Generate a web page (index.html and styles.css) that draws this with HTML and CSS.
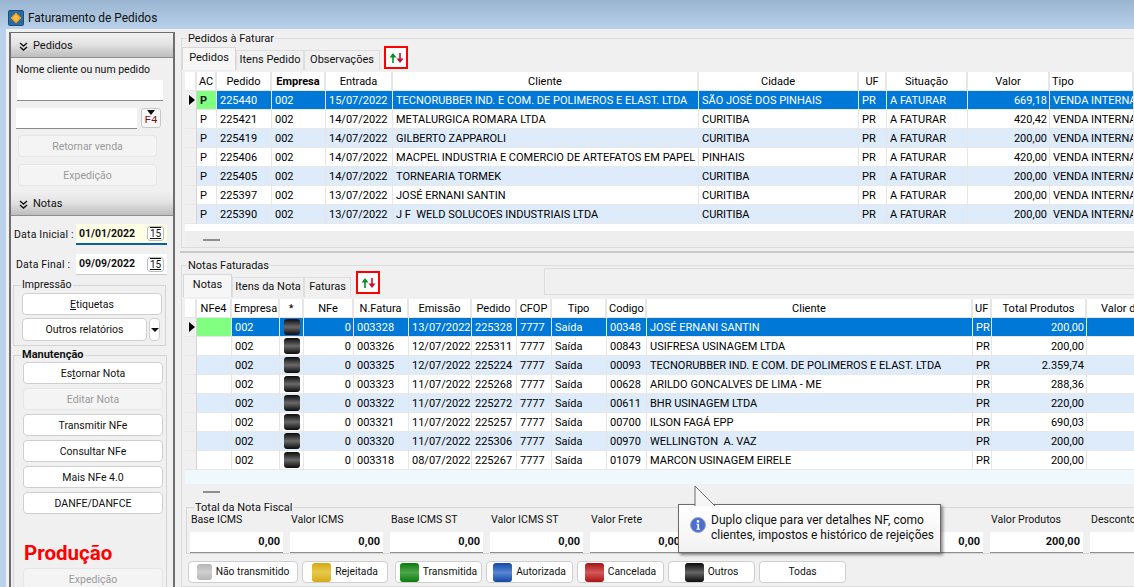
FILE: index.html
```html
<!DOCTYPE html>
<html lang="pt-BR">
<head>
<meta charset="utf-8">
<title>Faturamento de Pedidos</title>
<link rel="stylesheet" href="styles.css">
</head>
<body>
<div class="window">
  <header class="titlebar">
    <svg class="app-icon" width="16" height="16" viewBox="0 0 16 16"><rect width="16" height="16" rx="2" fill="#1b4f7c"/><rect x="1" y="1" width="14" height="14" rx="1" fill="#2a6aa0"/><path d="M8 2.5 13.5 8 8 13.5 2.5 8z" fill="#f59a1c"/><path d="M8 4.5 11.5 8 8 11.5 4.5 8z" fill="#fbc04e"/></svg>
    <span>Faturamento de Pedidos</span>
  </header>
  <div class="client">
    <aside class="sidebar">
      <div class="side-head"><svg width="9" height="9" viewBox="0 0 9 9"><path d="M1 1l3.5 3L8 1M1 5l3.5 3L8 5" fill="none" stroke="#111" stroke-width="1.4"/></svg><span>Pedidos</span></div>
      <div class="pedidos-body">
        <div class="lbl name-lbl">Nome cliente ou num pedido</div>
        <div class="input name-input"></div>
        <div class="input-row">
          <div class="input second-input"></div>
          <div class="f4"><i class="f4-arrow"></i><span>F4</span></div>
        </div>
        <button class="btn off b-ret">Retornar venda</button>
        <button class="btn off b-exp">Expedição</button>
      </div>
      <div class="side-head"><svg width="9" height="9" viewBox="0 0 9 9"><path d="M1 1l3.5 3L8 1M1 5l3.5 3L8 5" fill="none" stroke="#111" stroke-width="1.4"/></svg><span>Notas</span></div>
      <div class="notas-body">
        <div class="date-row first"><span class="date-lbl">Data Inicial :</span><div class="date focus"><b>01/01/2022</b><span class="cal">15</span></div></div>
        <div class="date-row second"><span class="date-lbl lbl2">Data Final :</span><div class="date"><b>09/09/2022</b><span class="cal">15</span></div></div>
        <section class="grp impressao">
          <div class="grp-title">Impressão</div>
          <button class="btn wide"><u>E</u>tiquetas</button>
          <div class="split"><button class="btn outros">Outros relatórios</button><button class="btn drop"><i></i></button></div>
        </section>
        <section class="grp manut">
          <div class="grp-title bold">Manutenção</div>
          <button class="btn act">Es<u>t</u>ornar Nota</button>
          <button class="btn act off">Editar Nota</button>
          <button class="btn act">Transmitir NFe</button>
          <button class="btn act">Consultar NFe</button>
          <button class="btn act">Mais NFe 4.0</button>
          <button class="btn act">DANFE/DANFCE</button>
          <div class="producao">Produção</div>
          <button class="btn act off">Expedição</button>
        </section>
      </div>
    </aside>
    <main class="main">
      <section class="pane top-pane">
        <div class="pane-title">Pedidos à Faturar</div>
        <div class="tabs">
          <span class="tab active t-ped">Pedidos</span><span class="tab t-ite">Itens Pedido</span><span class="tab t-obs">Observações</span>
          <span class="swap"><svg width="15" height="10" viewBox="0 0 15 10"><path d="M4 10V2" stroke="#0a8a2a" stroke-width="1.6"/><path d="M4 0 7.5 4.5H.5z" fill="#0a8a2a"/><path d="M11 0v8" stroke="#c8102e" stroke-width="1.6"/><path d="M11 10 14.5 5.5H7.5z" fill="#c8102e"/></svg></span>
        </div>
        <div class="grid-wrap g1">
          <table class="grid">
            <colgroup><col class="c12"><col class="c20"><col class="c55"><col class="c54"><col class="c67"><col class="c306"><col class="c160"><col class="c28"><col class="c81"><col class="c82"><col class="c84"></colgroup>
            <thead><tr><th></th><th>AC</th><th>Pedido</th><th class="strong">Empresa</th><th>Entrada</th><th>Cliente</th><th>Cidade</th><th>UF</th><th>Situação</th><th>Valor</th><th class="l">Tipo</th></tr></thead>
            <tbody>
              <tr class="sel"><td class="ind"><i class="tri"></i></td><td class="green ac">P</td><td>225440</td><td>002</td><td>15/07/2022</td><td>TECNORUBBER IND. E COM. DE POLIMEROS E ELAST. LTDA</td><td>SÃO JOSÉ DOS PINHAIS</td><td>PR</td><td>A FATURAR</td><td class="r">669,18</td><td>VENDA INTERNA</td></tr>
              <tr><td class="ind"></td><td class="ac">P</td><td>225421</td><td>002</td><td>14/07/2022</td><td>METALURGICA ROMARA LTDA</td><td>CURITIBA</td><td>PR</td><td>A FATURAR</td><td class="r">420,42</td><td>VENDA INTERNA</td></tr>
              <tr class="alt"><td class="ind"></td><td class="ac">P</td><td>225419</td><td>002</td><td>14/07/2022</td><td>GILBERTO ZAPPAROLI</td><td>CURITIBA</td><td>PR</td><td>A FATURAR</td><td class="r">200,00</td><td>VENDA INTERNA</td></tr>
              <tr><td class="ind"></td><td class="ac">P</td><td>225406</td><td>002</td><td>14/07/2022</td><td>MACPEL INDUSTRIA E COMERCIO DE ARTEFATOS EM PAPEL L</td><td>PINHAIS</td><td>PR</td><td>A FATURAR</td><td class="r">420,00</td><td>VENDA INTERNA</td></tr>
              <tr class="alt"><td class="ind"></td><td class="ac">P</td><td>225405</td><td>002</td><td>14/07/2022</td><td>TORNEARIA TORMEK</td><td>CURITIBA</td><td>PR</td><td>A FATURAR</td><td class="r">200,00</td><td>VENDA INTERNA</td></tr>
              <tr><td class="ind"></td><td class="ac">P</td><td>225397</td><td>002</td><td>13/07/2022</td><td>JOSÉ ERNANI SANTIN</td><td>CURITIBA</td><td>PR</td><td>A FATURAR</td><td class="r">200,00</td><td>VENDA INTERNA</td></tr>
              <tr class="alt"><td class="ind"></td><td class="ac">P</td><td>225390</td><td>002</td><td>13/07/2022</td><td>J F&nbsp; WELD SOLUCOES INDUSTRIAIS LTDA</td><td>CURITIBA</td><td>PR</td><td>A FATURAR</td><td class="r">200,00</td><td>VENDA INTERNA</td></tr>
            </tbody>
          </table>
        </div>
        <div class="scroll-band"><i class="dash"></i></div>
      </section>
      <section class="pane bottom-pane">
        <div class="pane-title">Notas Faturadas</div>
        <div class="tabs tabs2">
          <span class="tab active t-not">Notas</span><span class="tab t-itn">Itens da Nota</span><span class="tab t-fat">Faturas</span>
          <span class="swap swap2"><svg width="15" height="10" viewBox="0 0 15 10"><path d="M4 10V2" stroke="#0a8a2a" stroke-width="1.6"/><path d="M4 0 7.5 4.5H.5z" fill="#0a8a2a"/><path d="M11 0v8" stroke="#c8102e" stroke-width="1.6"/><path d="M11 10 14.5 5.5H7.5z" fill="#c8102e"/></svg></span>
          <span class="tab-box"></span>
        </div>
        <div class="grid-wrap g2">
          <table class="grid">
            <colgroup><col class="c12"><col class="c35"><col class="c48"><col class="c24"><col class="c50"><col class="c55"><col class="c63"><col class="c45"><col class="c35"><col class="c55"><col class="c40"><col class="c326"><col class="c19"><col class="c95"><col class="c60"></colgroup>
            <thead><tr><th></th><th>NFe4</th><th>Empresa</th><th>*</th><th>NFe</th><th>N.Fatura</th><th>Emissão</th><th>Pedido</th><th>CFOP</th><th>Tipo</th><th>Codigo</th><th>Cliente</th><th>UF</th><th>Total Produtos</th><th class="l">Valor de</th></tr></thead>
            <tbody>
              <tr class="sel"><td class="ind"><i class="tri"></i></td><td class="green"></td><td>002</td><td class="ledc"><i class="led"></i></td><td class="r">0</td><td>003328</td><td>13/07/2022</td><td>225328</td><td>7777</td><td>Saída</td><td>00348</td><td>JOSÉ ERNANI SANTIN</td><td>PR</td><td class="r">200,00</td><td></td></tr>
              <tr><td class="ind"></td><td></td><td>002</td><td class="ledc"><i class="led"></i></td><td class="r">0</td><td>003326</td><td>12/07/2022</td><td>225311</td><td>7777</td><td>Saída</td><td>00843</td><td>USIFRESA USINAGEM LTDA</td><td>PR</td><td class="r">200,00</td><td></td></tr>
              <tr class="alt"><td class="ind"></td><td></td><td>002</td><td class="ledc"><i class="led"></i></td><td class="r">0</td><td>003325</td><td>12/07/2022</td><td>225224</td><td>7777</td><td>Saída</td><td>00093</td><td>TECNORUBBER IND. E COM. DE POLIMEROS E ELAST. LTDA</td><td>PR</td><td class="r">2.359,74</td><td></td></tr>
              <tr><td class="ind"></td><td></td><td>002</td><td class="ledc"><i class="led"></i></td><td class="r">0</td><td>003323</td><td>11/07/2022</td><td>225268</td><td>7777</td><td>Saída</td><td>00628</td><td>ARILDO GONCALVES DE LIMA - ME</td><td>PR</td><td class="r">288,36</td><td></td></tr>
              <tr class="alt"><td class="ind"></td><td></td><td>002</td><td class="ledc"><i class="led"></i></td><td class="r">0</td><td>003322</td><td>11/07/2022</td><td>225272</td><td>7777</td><td>Saída</td><td>00611</td><td>BHR USINAGEM LTDA</td><td>PR</td><td class="r">220,00</td><td></td></tr>
              <tr><td class="ind"></td><td></td><td>002</td><td class="ledc"><i class="led"></i></td><td class="r">0</td><td>003321</td><td>11/07/2022</td><td>225257</td><td>7777</td><td>Saída</td><td>00700</td><td>ILSON FAGÁ EPP</td><td>PR</td><td class="r">690,03</td><td></td></tr>
              <tr class="alt"><td class="ind"></td><td></td><td>002</td><td class="ledc"><i class="led"></i></td><td class="r">0</td><td>003320</td><td>11/07/2022</td><td>225306</td><td>7777</td><td>Saída</td><td>00970</td><td>WELLINGTON&nbsp; A. VAZ</td><td>PR</td><td class="r">200,00</td><td></td></tr>
              <tr><td class="ind"></td><td></td><td>002</td><td class="ledc"><i class="led"></i></td><td class="r">0</td><td>003318</td><td>08/07/2022</td><td>225267</td><td>7777</td><td>Saída</td><td>01079</td><td>MARCON USINAGEM EIRELE</td><td>PR</td><td class="r">200,00</td><td></td></tr>
            </tbody>
          </table>
          <div class="pale"></div>
        </div>
        <div class="scroll-band band2"><i class="dash"></i></div>
        <div class="totals">
          <div class="pane-title tot-title">Total da Nota Fiscal</div>
          <div class="fields">
            <div class="field"><label>Base ICMS</label><output>0,00</output></div>
            <div class="field"><label>Valor ICMS</label><output>0,00</output></div>
            <div class="field"><label>Base ICMS ST</label><output>0,00</output></div>
            <div class="field"><label>Valor ICMS ST</label><output>0,00</output></div>
            <div class="field"><label>Valor Frete</label><output>0,00</output></div>
            <div class="field"><label></label><output></output></div>
            <div class="field"><label></label><output></output></div>
            <div class="field"><label></label><output>0,00</output></div>
            <div class="field"><label>Valor Produtos</label><output>200,00</output></div>
            <div class="field"><label>Desconto</label><output></output></div>
          </div>
        </div>
        <div class="legend">
          <button class="lg w110"><i class="sw gray"></i>Não transmitido</button>
          <button class="lg w86"><i class="sw yellow"></i>Rejeitada</button>
          <button class="lg w87 push"><i class="sw dgreen"></i>Transmitida</button>
          <button class="lg w87"><i class="sw blue"></i>Autorizada</button>
          <button class="lg w87"><i class="sw red"></i>Cancelada</button>
          <button class="lg w87"><i class="sw black"></i>Outros</button>
          <button class="lg w87">Todas</button>
        </div>
      </section>
      <div class="tooltip">
        <svg class="tip-arrow" width="22" height="21" viewBox="0 0 22 21"><path d="M1 21V1l20 20" fill="#f6f6f6" stroke="#6b6b6b"/></svg>
        <svg class="info" width="16" height="16" viewBox="0 0 16 16"><circle cx="8" cy="8" r="7.5" fill="#4a6fd0" stroke="#9aa6c4"/><circle cx="8" cy="4.4" r="1.3" fill="#fff"/><path d="M6.5 6.8h2.6v5h1v1H6.4v-1h1V7.8h-.9z" fill="#fff"/></svg>
        <p>Duplo clique para ver detalhes NF, como<br>clientes, impostos e histórico de rejeições</p>
      </div>
    </main>
  </div>
</div>
</body>
</html>
```
FILE: styles.css
```css
* { box-sizing: border-box; }
html, body { margin: 0; padding: 0; height: 100%; overflow: hidden; }
body { font: 11px/14px Roboto, "Liberation Sans", Arial, sans-serif; color: #111; }
button { font: inherit; color: inherit; padding: 0; }

.window { width: 1134px; height: 587px; display: flex; flex-direction: column; background: #b9d1ea; overflow: hidden; }
.titlebar { height: 29px; flex: none; display: flex; align-items: center; gap: 4px; padding: 6px 0 0 8px; background: linear-gradient(#99b4d1, #b9d1ea); font-size: 11.9px; color: #111; }
.app-icon { display: block; }
.client { flex: 1; min-height: 0; margin-left: 6px; display: flex; background: #f0f0f0; position: relative; }

.sidebar { width: 166px; flex: none; margin: 3px 0 0 3px; height: 600px; border: 1px solid #6e6e6e; border-width: 1px 2px; background: #f0f0f0; overflow: hidden; font-size: 10.5px; }
.side-head { height: 25px; display: flex; align-items: center; gap: 5px; padding: 2px 0 0 8px; background: linear-gradient(#f0f0f0, #e4e4e4 45%, #bdbdbd); border-bottom: 1px solid #8f8f8f; font-size: 11px; }
.pedidos-body { height: 133px; padding: 5px 0 0 5px; }
.lbl { line-height: 14px; }
.name-lbl { margin-bottom: 3px; }
.input { background: #fff; border-bottom: 1px solid #8a8a8a; }
.name-input { width: 146px; height: 21px; margin-left: 1px; }
.input-row { display: flex; gap: 4px; margin-top: 7px; }
.second-input { width: 121px; height: 21px; }
.f4 { width: 20px; height: 20px; background: #f7f7f7; border: 1px solid #c8c8c8; border-radius: 3px; display: flex; flex-direction: column; align-items: center; }
.f4-arrow { width: 0; height: 0; margin-top: 1px; border: 4px solid transparent; border-top: 5px solid #111; border-bottom: 0; }
.f4 span { font: 11px/10px "Liberation Mono", monospace; color: #7a1010; }
.btn { display: block; background: #fff; border: 1px solid #cfcfcf; border-radius: 4px; text-align: center; height: 22px; line-height: 19px; }
.btn.off { background: #f4f4f4; border-color: #e6e6e6; color: #9a9a9a; }
.b-ret, .b-exp { width: 139px; margin-left: 2px; }
.b-ret { margin-top: 6px; }
.b-exp { margin-top: 7px; }

.notas-body { padding: 0; position: relative; }
.date-row { display: flex; align-items: center; }
.date-row.first { margin-top: 8px; }
.date-row.second { margin-top: 9px; }
.date-lbl { width: 65px; padding-left: 3px; white-space: nowrap; letter-spacing: .2px; }
.lbl2 { padding-left: 5px; }
.date { width: 91px; height: 21px; background: #fff; display: flex; align-items: center; justify-content: space-between; padding: 0 3px 0 3px; border-bottom: 1px solid #c9c9c9; }
.date b { font-size: 10.5px; }
.date.focus { background: #ffffe6; border-bottom: 2px solid #0a5fa8; }
.cal { width: 17px; height: 15px; background: #fff; border: 1px solid #bdbdbd; border-radius: 3px; font-size: 10px; line-height: 13px; text-align: center; text-decoration: underline overline; color: #111; }

.grp { position: relative; border: 1px solid #d5d5d5; margin: 0 0 0 2px; }
.grp-title { position: absolute; top: -8px; left: 7px; background: #f0f0f0; padding: 0 1px; line-height: 14px; white-space: nowrap; }
.grp-title.bold { font-weight: 700; font-size: 11px; left: 7px; }
.impressao { width: 153px; height: 61px; margin-top: 10px; padding: 7px 0 0 8px; }
.btn.wide { width: 140px; height: 22px; }
.split { display: flex; gap: 2px; margin-top: 3px; }
.btn.outros { width: 125px; height: 23px; }
.btn.drop { width: 11px; height: 23px; display: flex; align-items: center; justify-content: center; }
.drop i { width: 0; height: 0; border: 4px solid transparent; border-top: 4px solid #111; border-bottom: 0; }
.manut { width: 154px; height: 240px; margin-top: 9px; padding-top: 6px; padding-left: 9px; }
.btn.act { width: 140px; height: 22px; margin-bottom: 4px; }
.producao { font-size: 20.5px; line-height: 22px; font-weight: 700; color: #f00; margin: 28px 0 4px 1px; }

.main { flex: 1; min-width: 0; margin-left: 5px; position: relative; overflow: hidden; }
.pane { position: relative; }
.top-pane { height: 224px; border-bottom: 2px solid #c8c8c8; }
.pane-title { position: absolute; left: 7px; top: 3px; background: #f0f0f0; padding: 0 1px; line-height: 14px; z-index: 1; }
.top-pane::before, .bottom-pane::before { content: ""; position: absolute; left: 1px; right: 0; top: 9px; bottom: 3px; border: 1px solid #dcdcdc; border-right: 0; }
.bottom-pane::before { top: 12px; bottom: 0; }
.bottom-pane > .pane-title { top: 6px; }
.tabs { position: relative; height: 43px; padding: 18px 0 2px 2px; display: flex; align-items: flex-end; }
.tab { height: 20px; line-height: 18px; background: #f0f0f0; border: 1px solid #dedede; border-bottom: 0; text-align: center; white-space: nowrap; }
.tab.active { height: 23px; background: #f6f6f6; border-color: #d8d8d8; line-height: 20px; }
.t-ped { width: 54px; } .t-ite { width: 68px; } .t-obs { width: 76px; }
.t-not { width: 49px; } .t-itn { width: 72px; } .t-fat { width: 47px; }
.swap { position: absolute; left: 204px; top: 17px; width: 24px; height: 23px; background: #fff; border: 2px solid #f00; display: flex; align-items: center; justify-content: center; }
.swap2 { left: 176px; top: 18px; }
.tabs2 { height: 46px; padding: 18px 0 2px 3px; }
.tab-box { position: absolute; left: 364px; top: 15px; right: -4px; height: 27px; border: 1px solid #dcdcdc; background: #f0f0f0; }
.grid-wrap { position: relative; margin-left: 5px; background: #fff; overflow: hidden; }
.g1 { height: 159px; }
.g2 { height: 185px; }
.pale { height: 14px; background: #eef8fd; }
.grid { table-layout: fixed; border-collapse: separate; border-spacing: 0; color: #000; }
.g1 .grid { width: 949px; }
.g2 .grid { width: 962px; }
.c12{width:12px}.c19{width:19px}.c20{width:20px}.c24{width:24px}.c28{width:28px}.c35{width:35px}.c40{width:40px}.c45{width:45px}.c48{width:48px}.c50{width:50px}.c54{width:54px}.c55{width:55px}.c60{width:60px}.c63{width:63px}.c67{width:67px}.c81{width:81px}.c82{width:82px}.c84{width:84px}.c95{width:95px}.c160{width:160px}.c306{width:306px}.c326{width:326px}
.grid th { height: 19px; padding: 1px 2px 0; font-weight: 400; background: #fff; border-right: 2px solid #e6e6e6; border-bottom: 1px solid #e6e6e6; text-align: center; white-space: nowrap; overflow: hidden; }
.grid th.strong { font-weight: 700; }
.grid th.l { text-align: left; }
.g2 .grid th.l { padding-left: 14px; }
.grid td { height: 19px; padding: 1px 2px 0 3px; background: #fff; border-right: 1px solid #e6e6e6; border-bottom: 1px solid #e8e8e8; white-space: nowrap; overflow: hidden; line-height: 14px; }
.grid td.r { text-align: right; }
.grid td.ind { background: #f0f0f0; padding: 0; border-right: 1px solid #d4d4d4; }
.grid tr.alt td { background: #ddebfb; }
.grid tr.alt td.ind { background: #f0f0f0; }
.grid tr.sel td { background: #0078d7; color: #fff; }
.grid tr.sel td.ind { background: #f0f0f0; }
.grid tr td.green, .grid tr.sel td.green { background: #80ff80; color: #111; font-weight: 700; }
.tri { display: block; width: 0; height: 0; margin-left: 4px; border: 5px solid transparent; border-left: 6px solid #000; border-right: 0; }
.ledc { padding: 0 !important; text-align: center; }
.led { display: block; width: 16px; height: 16px; margin: 0 auto; border-radius: 3px; background: linear-gradient(#0a0a0a, #6a6a6a 50%, #0a0a0a); }

.scroll-band { height: 16px; background: #eee; margin-left: 5px; position: relative; }
.dash { position: absolute; left: 18px; top: 8px; width: 17px; height: 2px; background: #8f8f8f; }
.band2 { height: 23px; background: #f0f0f0; }
.band2 .dash { top: 7px; }

.bottom-pane { height: 334px; }
.totals { position: relative; margin: 0 0 0 6px; height: 47px; border-top: 1px solid #d8d8d8; border-bottom: 1px solid #d8d8d8; border-left: 1px solid #d8d8d8; padding-top: 5px; }
.tot-title { left: 7px; top: -7px; }
.fields { display: flex; padding-left: 3px; gap: 7px; }
.field { width: 93px; flex: none; }
.field label { display: block; font-size: 10.6px; line-height: 14px; height: 19px; padding-left: 1px; white-space: nowrap; }
.field output { display: block; height: 21px; background: #fff; border-bottom: 1px solid #8f8f8f; padding-right: 3px; text-align: right; font-weight: 700; line-height: 20px; }
.legend { display: flex; gap: 4px; padding: 7px 0 0 8px; position: relative; font-size: 10.3px; }
.lg { height: 22px; background: #fff; border: 1px solid #cfcfcf; border-radius: 4px; display: flex; align-items: center; justify-content: center; gap: 4px; white-space: nowrap; font-size: 10.3px; }
.w110 { width: 110px; } .w86 { width: 86px; } .w87 { width: 87px; }
.push { margin-left: 3px; }
.sw { width: 19px; height: 19px; border-radius: 3px; flex: none; }
.sw.gray { width: 15px; height: 16px; background: linear-gradient(#b5b5b5, #d0d0d0 50%, #b5b5b5); }
.yellow { background: linear-gradient(#d4a912, #e8c84e 50%, #d4a912); }
.dgreen { background: linear-gradient(#0b7a0b, #4ea84e 50%, #0b7a0b); }
.blue { background: linear-gradient(#1248a8, #5a86d2 50%, #1248a8); }
.red { background: linear-gradient(#a81212, #d25a5a 50%, #a81212); }
.black { background: linear-gradient(#0a0a0a, #666 50%, #0a0a0a); }

.tooltip { position: absolute; left: 498px; top: 475px; width: 263px; height: 49px; background: linear-gradient(#fff, #f2f2f2); border: 1px solid #6b6b6b; box-shadow: 2px 2px 3px rgba(0,0,0,.45); display: flex; align-items: flex-start; gap: 5px; padding: 6px 0 0 11px; z-index: 5; }
.tip-arrow { position: absolute; left: 15px; top: -20px; }
.info { margin-top: 6px; flex: none; }
.tooltip p { margin: 2px 0 0; font-size: 12px; line-height: 15px; white-space: nowrap; }
```
